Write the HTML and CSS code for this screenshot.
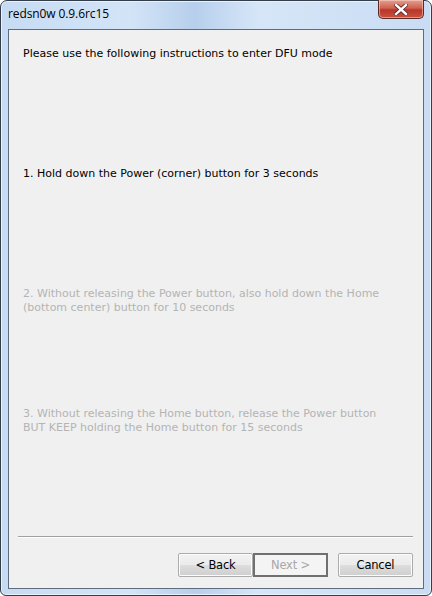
FILE: index.html
```html
<!DOCTYPE html>
<html lang="en">

<head>
    <meta charset="UTF-8">
    <title>redsn0w 0.9.6rc15</title>
    <link rel="stylesheet" href="styles.css">
</head>

<body>
    <div class="window">
        <div class="titlebar">
            <span class="title">redsn0w 0.9.6rc15</span>
            <button class="close">
                <svg width="14" height="11" viewBox="0 0 14 11">
                    <path d="M2 1 L12 10 M12 1 L2 10" stroke="#5a2020" stroke-width="4" stroke-linecap="square"/>
                    <path d="M2 1 L12 10 M12 1 L2 10" stroke="#ffffff" stroke-width="2.4" stroke-linecap="square"/>
                </svg>
            </button>
        </div>
        <div class="client">
            <div class="steps">
                <p class="step">Please use the following instructions to enter DFU mode</p>
                <p class="step">1. Hold down the Power (corner) button for 3 seconds</p>
                <p class="step off">2. Without releasing the Power button, also hold down the Home<br>(bottom center) button for 10 seconds</p>
                <p class="step off">3. Without releasing the Home button, release the Power button<br>BUT KEEP holding the Home button for 15 seconds</p>
            </div>
            <div class="footer">
                <hr class="sep">
                <div class="buttons">
                    <button class="btn">&lt; Back</button>
                    <button class="btn default" disabled>Next &gt;</button>
                    <button class="btn cancel">Cancel</button>
                </div>
            </div>
        </div>
    </div>
</body>

</html>
```

FILE: styles.css
```css
* {
    padding: 0;
    margin: 0;
    box-sizing: border-box;
}

body {
    width: 432px;
    height: 596px;
    background-color: #ffffff;
    font-family: "DejaVu Sans", "Liberation Sans", sans-serif;
}

.window {
    width: 432px;
    height: 596px;
    border: 1px solid #343d4a;
    border-radius: 7px 7px 6px 6px;
    background: linear-gradient(90deg, #c6dbf3 0%, #d3e4f7 30%, #b7cfec 45%, #d6e6f8 60%, #c9dcf3 100%);
    box-shadow: inset 0 0 0 1px #e8f2fc;
    padding: 0 7px 6px 7px;
    display: flex;
    flex-direction: column;
}

.titlebar {
    height: 28px;
    display: flex;
    align-items: flex-start;
    justify-content: space-between;
}

.title {
    font-family: "Open Sans", "DejaVu Sans", sans-serif;
    font-size: 12px;
    color: #000;
    padding-top: 4px;
    letter-spacing: -0.1px;
}

.close {
    width: 46px;
    height: 19px;
    margin-top: -1px;
    border: 1px solid #5b2a26;
    border-top: none;
    border-radius: 0 0 5px 5px;
    background: linear-gradient(180deg, #e3a090 0%, #d0614f 45%, #b8362a 55%, #c9523d 100%);
    box-shadow: inset 0 0 0 1px rgba(255, 220, 210, 0.5);
    display: flex;
    align-items: center;
    justify-content: center;
}

.client {
    flex: 1;
    border: 1px solid #5e6d7e;
    background-color: #f0f0f0;
    display: flex;
    flex-direction: column;
}

.steps {
    padding: 17px 14px 0 14px;
    flex: 1;
}

.step {
    height: 120px;
    font-size: 11px;
    line-height: 14px;
    color: #000;
    letter-spacing: 0;
}

.step.off {
    color: #b4b4b4;
}

.footer {
    padding: 0 10px 11px 9px;
}

.sep {
    border: none;
    border-top: 1px solid #a0a0a0;
    border-bottom: 1px solid #ffffff;
    margin-bottom: 15px;
}

.buttons {
    display: flex;
    justify-content: flex-end;
}

.btn {
    width: 75px;
    height: 24px;
    font-family: "DejaVu Sans", sans-serif;
    font-size: 11.5px;
    letter-spacing: -0.2px;
    color: #000;
    border: 1px solid #acacac;
    border-radius: 2px;
    background: linear-gradient(180deg, #f2f2f2 0%, #ebebeb 50%, #dddddd 51%, #cfcfcf 100%);
    box-shadow: inset 0 0 0 1px #fcfcfc;
}

.btn.default {
    border: 2px solid #707070;
    border-radius: 0;
    background: #f4f4f4;
    box-shadow: none;
    color: #a8a8a8;
}

.btn.cancel {
    margin-left: 10px;
}
```
